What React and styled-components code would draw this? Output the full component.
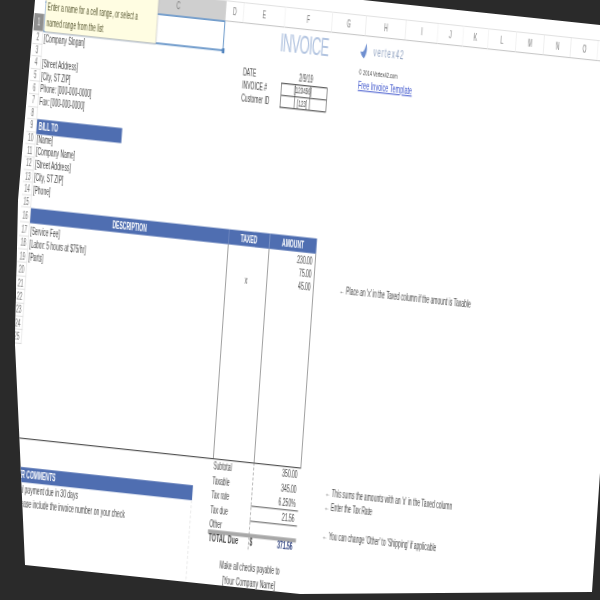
import React from 'react';
import styled, { createGlobalStyle, css } from 'styled-components';

// column widths on the sheet before it gets squeezed by the transform
const COL_WIDTHS = [20, 20, 150, 190, 36, 82, 94, 68, 80, 64, 50, 50, 56, 56, 54, 54, 76];
// A, B and P have no readable letter in the picture (under the tooltip / off the edge)
const COL_LETTERS = ['', '', 'C', 'D', 'E', 'F', 'G', 'H', 'I', 'J', 'K', 'L', 'M', 'N', 'O', ''];
const COL_KEYS = ['A', 'B', 'C', 'D', 'E', 'F', 'G', 'H', 'I', 'J', 'K', 'L', 'M', 'N', 'O', 'P'];

// excel rows 1..41, plus the two bands over them
const ROW_HEIGHTS = [
  15, 21, 30,
  ...Array(14).fill(12.6),
  15,
  ...Array(16).fill(13.375),
  15, 14, 15, 15, 12, 16, 11, 14, 16,
];

const Global = createGlobalStyle`
  html, body { margin: 0; padding: 0; background: #2a2a2a; }
`;

const Stage = styled.div`
  width: 600px; height: 600px; overflow: hidden; background: #2a2a2a;
`;
const Paper = styled.div`
  width: 600px; height: 600px; background: #fff; overflow: hidden;
  clip-path: polygon(35px 0, 363px 0, 600px 25px, 600px 473px, 592px 592px, 300px 594px, 25px 565px, 19px 430px, 15px 345px, 18px 200px);
`;
const Sheet = styled.div`
  width: 1200px; display: grid;
  grid-template-columns: ${COL_WIDTHS.map(w => `${w}px`).join(' ')};
  grid-template-rows: ${ROW_HEIGHTS.map(h => `${h}px`).join(' ')};
  font-family: "Liberation Sans", Arial, sans-serif; font-size: 10px; color: #454545;
  transform-origin: 0 0;
  transform: matrix(0.5, 0.0535, -0.07, 1, 38, -35);
  filter: blur(0.6px);
`;

const place = css`
  grid-column: ${({ $c }) => $c} / span ${({ $span }) => $span || 1};
  grid-row: ${({ $r }) => $r + 2} / span ${({ $rows }) => $rows || 1};
`;

const ColHead = styled.div`
  ${place};
  display: flex; align-items: center; justify-content: center;
  font-size: 10px; color: #777;
  background: ${({ $on }) => ($on ? '#cfcfcf' : '#fff')};
  border-top: 1px solid #e2e2e2;
  border-bottom: 1px solid ${({ $on }) => ($on ? '#7ea3cc' : '#c4c4c4')};
  border-right: 1px solid #dcdcdc;
`;
const RowHead = styled.div`
  ${place};
  display: flex; align-items: center; justify-content: center;
  font-size: 10px; color: ${({ $on }) => ($on ? '#eee' : '#777')};
  background: ${({ $on }) => ($on ? '#8f8f8f' : '#fff')};
  margin-top: ${({ $on }) => ($on ? 12 : 0)}px;
  border-bottom: 1px solid #dadada;
  border-right: 1px solid #dadada;
`;
const Cell = styled.div`
  ${place};
  display: flex; align-items: center; white-space: nowrap; min-width: 0;
  justify-content: ${({ $align }) => $align || 'flex-start'};
  color: ${({ $color }) => $color || 'inherit'};
  font-weight: ${({ $bold }) => ($bold ? 700 : 400)};
  font-size: ${({ $size }) => $size || 10}px;
  padding-left: ${({ $pad }) => $pad || 0}px;
  padding-right: ${({ $padR }) => $padR || 0}px;
  text-indent: ${({ $indent }) => $indent || 0}px;
`;
const Selection = styled.div`
  ${place};
  border: 1px solid #6f9bcb; border-width: 1px 2px 2px 1px; position: relative;
  &::after {
    content: ''; position: absolute; right: -4px; bottom: -4px;
    width: 5px; height: 5px; background: #4f82bd;
  }
`;
const Tip = styled.div`
  position: absolute; left: 22px; top: 0; width: 222px; height: 65px; box-sizing: border-box;
  padding: 33px 0 0 3px;
  background: #fffde2; box-shadow: 1px 1px 2px #bbb; color: #55552f;
  font-size: 10px; line-height: 16px; white-space: nowrap;
`;
const Band = styled(Cell)`
  background: #4f6eb1; color: #fff; font-weight: 700;
  margin-block: ${({ $grow }) => ($grow ? -1 : 0)}px;
`;
const Title = styled(Cell)`
  font-size: 26px; color: #b2c4e0; letter-spacing: -1.5px;
`;
const Rule = styled.div`
  ${place};
  border-left: ${({ $left }) => $left || 'none'};
  border-right: ${({ $right }) => $right || 'none'};
  border-top: ${({ $top }) => $top || 'none'};
  border-bottom: ${({ $bottom }) => $bottom || 'none'};
`;
const IdBox = styled.div`
  ${place};
  display: grid; grid-template-columns: 28px 30px 1fr; grid-template-rows: 1fr 1fr;
  border: 1px solid #333; margin: 0 0 0 2px;
`;
const IdCell = styled.div`
  display: flex; align-items: center; justify-content: center; white-space: nowrap; font-size: 9px;
  border-right: ${({ $last }) => ($last ? 'none' : '1px solid #444')};
  border-bottom: ${({ $low }) => ($low ? 'none' : '1px solid #444')};
`;
const Logo = styled(Cell)`
  gap: 6px; color: #8ea0bf; font-size: 12px; letter-spacing: 2px;
  svg { flex-shrink: 0; }
`;
const TemplateLink = styled.a`
  color: #3e55cc; text-decoration: underline; font-size: 11px;
`;

const LeafIcon = () => (
  <svg width="20" height="16" viewBox="0 0 20 16">
    <path d="M11 0 C14 5 13 11 8 15 C4 14 1 11 0 8 C4 10 8 9 11 0 Z" fill="#6f8fd0" />
  </svg>
);

const colOf = letter => COL_KEYS.indexOf(letter) + 2;

const LEFT_LINES = [
  [2, '[Company Slogan]'],
  [4, '[Street Address]'],
  [5, '[City, ST  ZIP]'],
  [6, 'Phone: [000-000-0000]'],
  [7, 'Fax: [000-000-0000]'],
  [10, '[Name]'],
  [11, '[Company Name]'],
  [12, '[Street Address]'],
  [13, '[City, ST  ZIP]'],
  [14, '[Phone]'],
  [17, '[Service Fee]'],
  [18, '[Labor: 5 hours at $75/hr]'],
  [19, '[Parts]'],
];

const AMOUNTS = [[17, '230.00'], [18, '75.00'], [19, '45.00']];

const TOTALS = [
  [33, 'Subtotal', '350.00'],
  [34, 'Taxable', '345.00'],
  [35, 'Tax rate', '6.250%'],
  [36, 'Tax due', '21.56'],
  [37, 'Other', ''],
];

const NOTES = [
  [19, "← Place an 'x' in the Taxed column if the amount is Taxable"],
  [34, "← This sums the amounts with an 'x' in the Taxed column"],
  [35, '← Enter the Tax Rate'],
  [37, "← You can change 'Other' to 'Shipping' if applicable"],
];

export default function App() {
  return (
    <Stage>
      <Global />
      <Paper>
        <Sheet>
          {/* column and row headers */}
          {COL_KEYS.map((key, i) => (
            <ColHead key={key} $c={i + 2} $r={0} $on={i < 3}>{COL_LETTERS[i]}</ColHead>
          ))}
          {Array.from({ length: 25 }, (_, i) => (
            <RowHead key={i} $c={1} $r={i + 1} $on={i === 0}>{i + 1}</RowHead>
          ))}

          <Selection $c={2} $span={3} $r={1} />

          {LEFT_LINES.map(([r, text]) => (
            <Cell key={r} $c={2} $span={3} $r={r} $pad={2}>{text}</Cell>
          ))}

          <Band $c={2} $span={2} $r={9} $pad={4} $grow>BILL TO</Band>

          {/* invoice heading */}
          <Title $c={colOf('E')} $span={2} $r={1} $align="flex-end" $padR={4}>INVOICE</Title>
          <Cell $c={colOf('E')} $r={3} $pad={6}>DATE</Cell>
          <Cell $c={colOf('E')} $r={4} $pad={6}>INVOICE #</Cell>
          <Cell $c={colOf('E')} $r={5} $pad={6}>Customer ID</Cell>
          <Cell $c={colOf('F')} $r={3} $align="center" $pad={6}>2/9/19</Cell>
          <IdBox $c={colOf('F')} $r={4} $rows={2}>
            <IdCell />
            <IdCell>[123456]</IdCell>
            <IdCell $last />
            <IdCell $low />
            <IdCell $low>[123]</IdCell>
            <IdCell $low $last />
          </IdBox>

          <Logo $c={colOf('G')} $span={4} $r={1} $pad={60}><LeafIcon />vertex42</Logo>
          <Cell $c={colOf('G')} $span={4} $r={2} $pad={60} $size={8}>© 2014 Vertex42.com</Cell>
          <Cell $c={colOf('G')} $span={4} $r={3} $pad={60}><TemplateLink>Free Invoice Template</TemplateLink></Cell>

          {/* line items */}
          <Band $c={2} $span={4} $r={16} $align="center">DESCRIPTION</Band>
          <Band $c={colOf('E')} $r={16} $align="center">TAXED</Band>
          <Band $c={colOf('F')} $r={16} $align="center">AMOUNT</Band>
          <Rule $c={colOf('E')} $r={17} $rows={16} $left="1px solid #444" />
          <Rule $c={colOf('F')} $r={17} $rows={16} $left="1px solid #444" $right="1px solid #444" />
          <Cell $c={colOf('E')} $r={19} $align="center">x</Cell>
          {AMOUNTS.map(([r, value]) => (
            <Cell key={r} $c={colOf('F')} $r={r} $align="flex-end" $padR={6}>{value}</Cell>
          ))}
          <Rule $c={2} $span={6} $r={33} $top="1px solid #333" />

          {/* comments */}
          <Band $c={2} $span={3} $r={35} $indent={-10}>OTHER COMMENTS</Band>
          <Cell $c={2} $span={3} $r={36} $indent={-8}>1. Total payment due in 30 days</Cell>
          <Cell $c={2} $span={3} $r={37}>2. Please include the invoice number on your check</Cell>
          <Rule $c={4} $r={36} $rows={6} $right="1px dashed #d4d4d4" />

          {/* totals */}
          {TOTALS.map(([r, label, value]) => (
            <React.Fragment key={r}>
              <Cell $c={colOf('E')} $r={r} $pad={2}>{label}</Cell>
              <Cell $c={colOf('F')} $r={r} $align="flex-end" $padR={6}>{value}</Cell>
            </React.Fragment>
          ))}
          <Rule $c={colOf('F')} $r={33} $rows={6} $left="1px dashed #777" />
          <Rule $c={colOf('F')} $r={35} $bottom="1px solid #555" />
          <Rule $c={colOf('F')} $r={36} $bottom="1px solid #555" />
          <Rule $c={colOf('E')} $span={2} $r={38} $top="4px solid #a8a8a8" />
          <Cell $c={colOf('E')} $r={38} $bold $size={11} $pad={2}>TOTAL Due</Cell>
          <Cell $c={colOf('F')} $r={38} $pad={2} $bold>$</Cell>
          <Cell $c={colOf('F')} $r={38} $align="flex-end" $padR={6} $bold $color="#2b3f7d">371.56</Cell>

          <Cell $c={colOf('E')} $span={2} $r={40} $align="center">Make all checks payable to</Cell>
          <Cell $c={colOf('E')} $span={2} $r={41} $align="center" $size={10.5}>[Your Company Name]</Cell>

          {NOTES.map(([r, text]) => (
            <Cell key={r} $c={colOf('G')} $span={6} $r={r} $pad={52} $size={10}>{text}</Cell>
          ))}

          <Tip>
            Enter a name for a cell range, or select a<br />
            named range from the list
          </Tip>
        </Sheet>
      </Paper>
    </Stage>
  );
}
